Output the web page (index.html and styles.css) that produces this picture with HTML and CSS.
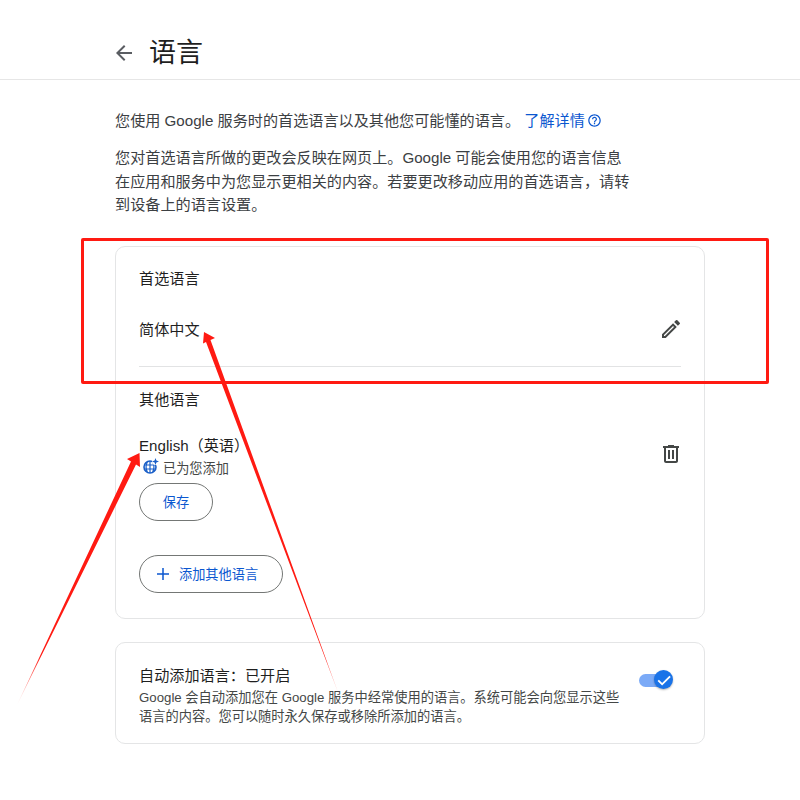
FILE: index.html
```html
<!DOCTYPE html>
<html lang="zh-CN">
<head>
<meta charset="utf-8">
<title>语言</title>
<link rel="stylesheet" href="styles.css">
</head>
<body>
<header class="topbar">
  <svg class="back" viewBox="0 0 24 24" width="24" height="24"><path d="M20 11H7.830l5.590-5.590L12 4l-8 8 8 8 1.410-1.410L7.830 13H20z"/></svg>
  <h1 class="title">语言</h1>
</header>
<main class="content">
  <p class="intro">您使用 Google 服务时的首选语言以及其他您可能懂的语言。 <a class="link">了解详情<svg class="help" viewBox="0 0 24 24" width="15" height="15"><path d="M11 18h2v-2h-2v2zm1-16C6.480 2 2 6.480 2 12s4.480 10 10 10 10-4.480 10-10S17.520 2 12 2zm0 18c-4.410 0-8-3.590-8-8s3.590-8 8-8 8 3.590 8 8-3.590 8-8 8zm0-14c-2.210 0-4 1.790-4 4h2c0-1.100.9-2 2-2s2 .9 2 2c0 2-3 1.750-3 5h2c0-2.250 3-2.500 3-5 0-2.210-1.790-4-4-4z"/></svg></a></p>
  <p class="note">您对首选语言所做的更改会反映在网页上。Google 可能会使用您的语言信息<br>在应用和服务中为您显示更相关的内容。若要更改移动应用的首选语言，请转<br>到设备上的语言设置。</p>

  <section class="card langs">
    <h2 class="label">首选语言</h2>
    <div class="row primary">
      <span class="lang">简体中文</span>
      <svg class="icon" viewBox="0 0 24 24" width="24" height="24"><path d="M3 17.250V21h3.750L17.810 9.940l-3.750-3.750L3 17.250zM5.920 19H5v-.92l9.060-9.060.92.92L5.920 19zM20.710 5.630l-2.340-2.340a1 1 0 0 0-1.410 0l-1.830 1.830 3.750 3.750 1.830-1.830a1 1 0 0 0 0-1.410z"/></svg>
    </div>
    <hr class="divider">
    <h2 class="label other">其他语言</h2>
    <div class="row secondary">
      <div class="lang-info">
        <span class="lang">English（英语）</span>
        <span class="added">
          <svg class="globe" viewBox="0 0 16 16" width="16" height="16"><circle cx="7" cy="9" r="6" fill="none" stroke="#1a5fc8" stroke-width="1.600"/><path d="M1 7h12M1 11h12M7 3v12M4.300 4c-1.500 3-1.500 7 0 10M9.700 4c1.500 3 1.500 7 0 10" fill="none" stroke="#1a5fc8" stroke-width="1.200"/><circle cx="12.500" cy="3.500" r="3.500" fill="#fff"/><path d="M12.500 0l.9 2.600 2.600.9-2.600.9-.9 2.600-.9-2.600L9 3.500l2.600-.9z" fill="#1a5fc8"/></svg>
          已为您添加
        </span>
        <button class="pill save">保存</button>
      </div>
      <svg class="icon trash" viewBox="0 0 24 24" width="24" height="24"><path d="M15 4V3H9v1H4v2h1v13c0 1.100.9 2 2 2h10c1.100 0 2-.9 2-2V6h1V4h-5zm2 15H7V6h10v13zM9 8h2v9H9zm4 0h2v9h-2z"/></svg>
    </div>
    <button class="pill add">
      <svg class="plus" viewBox="0 0 24 24" width="18" height="18"><path d="M20 13h-7v7h-2v-7H4v-2h7V4h2v7h7v2z"/></svg>
      添加其他语言
    </button>
  </section>

  <section class="card auto">
    <div class="auto-text">
      <h2 class="auto-title">自动添加语言：已开启</h2>
      <p class="auto-desc">Google 会自动添加您在 Google 服务中经常使用的语言。系统可能会向您显示这些<br>语言的内容。您可以随时永久保存或移除所添加的语言。</p>
    </div>
    <div class="switch">
      <span class="track"></span>
      <span class="thumb"><svg viewBox="0 0 24 24" width="18" height="18"><path d="M9.500 17.200 5.200 12.900 3.400 14.700l6.100 6.100L21 9.300 19.200 7.500z" fill="#fff"/></svg></span>
    </div>
  </section>
</main>

<div class="mark-box"></div>
<svg class="arrows" width="800" height="800" viewBox="0 0 800 800">
  <defs>
    <linearGradient id="fade1" gradientUnits="userSpaceOnUse" x1="140" y1="455" x2="17" y2="705">
      <stop offset="0" stop-color="#ff1a12"/><stop offset=".8" stop-color="#ff1a12"/><stop offset="1" stop-color="#ff1a12" stop-opacity=".1"/>
    </linearGradient>
    <linearGradient id="fade2" gradientUnits="userSpaceOnUse" x1="205" y1="333" x2="339" y2="695">
      <stop offset="0" stop-color="#ff1a12"/><stop offset=".9" stop-color="#ff1a12"/><stop offset="1" stop-color="#ff1a12" stop-opacity=".2"/>
    </linearGradient>
  </defs>
  <path fill="url(#fade1)" d="M139.500 453 L140 467 L136 464.500 L17 705 L131 461.500 L127 459 Z"/>
  <path fill="url(#fade2)" d="M204 332 L215 338 L210.500 340 L339 695 L206 342 L203 343.500 Z"/>
</svg>
</body>
</html>
```
FILE: styles.css
```css
* { box-sizing: border-box; }
html, body { margin: 0; padding: 0; }
body {
  width: 800px;
  height: 800px;
  overflow: hidden;
  background: #fff;
  color: #1f1f1f;
  font-family: "Liberation Sans", "Noto Sans CJK SC", sans-serif;
  position: relative;
}
.topbar {
  height: 80px;
  border-bottom: 1px solid #e6e6e6;
  display: flex;
  align-items: center;
  padding: 27px 0 0 112px;
  gap: 13px;
}
.back { fill: #5a5d62; }
.title { margin: 0; font-size: 27px; font-weight: 400; line-height: 32px; }
.content { width: 590px; margin-left: 115px; padding-top: 31px; }
.intro { margin: 0; font-size: 15.130px; line-height: 20px; color: #3c4043; white-space: nowrap; }
.link { color: #0b57d0; }
.help { fill: #0b57d0; vertical-align: -2px; margin-left: 2px; }
.note { margin: 15px 0 0; font-size: 15.130px; line-height: 23.500px; color: #3c4043; white-space: nowrap; }
.card {
  border: 1px solid #e4e5e6;
  border-radius: 10px;
  background: #fff;
}
.langs {
  margin-top: 29px;
  height: 373px;
  padding: 22px 23px 0;
  display: flex;
  flex-direction: column;
  align-items: flex-start;
}
.label { margin: 0; font-size: 15.130px; font-weight: 400; line-height: 20px; color: #1f1f1f; }
.row { width: 100%; display: flex; justify-content: space-between; }
.primary { margin-top: 29px; height: 24px; align-items: center; }
.lang { font-size: 15.130px; line-height: 20px; color: #1f1f1f; }
.icon { fill: #444746; margin: -2px -2px 0 0; }
.divider { width: 100%; border: 0; border-top: 1px solid #e2e3e4; margin: 24px 0 0; }
.other { margin-top: 23px; }
.secondary { margin-top: 26px; align-items: flex-start; }
.lang-info { display: flex; flex-direction: column; align-items: flex-start; }
.added { display: flex; align-items: center; gap: 4px; font-size: 13.200px; line-height: 16px; color: #444746; margin-top: 5px; padding-left: 4px; }
.globe { margin-top: -5px; }
.trash { margin-top: 6px; }
.pill {
  display: flex;
  align-items: center;
  justify-content: center;
  height: 38px;
  border: 1px solid #747775;
  border-radius: 19px;
  background: #fff;
  font: inherit;
  font-size: 13.200px;
  color: #0b57d0;
  padding: 0;
}
.save { width: 74px; margin-top: 6px; }
.add { width: 144px; margin-top: 34px; gap: 7px; justify-content: flex-start; padding-left: 14px; }
.plus { fill: #0b57d0; }
.auto {
  margin-top: 23px;
  height: 102px;
  padding: 23px 23px 0;
  display: flex;
  justify-content: space-between;
}
.auto-title { margin: 0; font-size: 15.130px; font-weight: 400; line-height: 20px; color: #1f1f1f; }
.auto-desc { margin: 2px 0 0; font-size: 13.240px; line-height: 19.500px; color: #444746; white-space: nowrap; }
.switch { position: relative; width: 36px; height: 24px; margin-top: 2px; margin-right: 7px; }
.track { position: absolute; left: 1px; top: 6px; width: 26px; height: 13px; border-radius: 7px; background: #7baaf7; }
.thumb {
  position: absolute;
  left: 16px;
  top: 2px;
  width: 19px;
  height: 19px;
  border-radius: 50%;
  background: #1a73e8;
  display: flex;
  align-items: center;
  justify-content: center;
  box-shadow: 0 1px 2px rgba(0,0,0,.3);
}
.mark-box {
  position: absolute;
  left: 81px;
  top: 238px;
  width: 688px;
  height: 146px;
  border: 3px solid #ff1a12;
  border-radius: 2px;
}
.arrows { position: absolute; left: 0; top: 0; pointer-events: none; }
```
